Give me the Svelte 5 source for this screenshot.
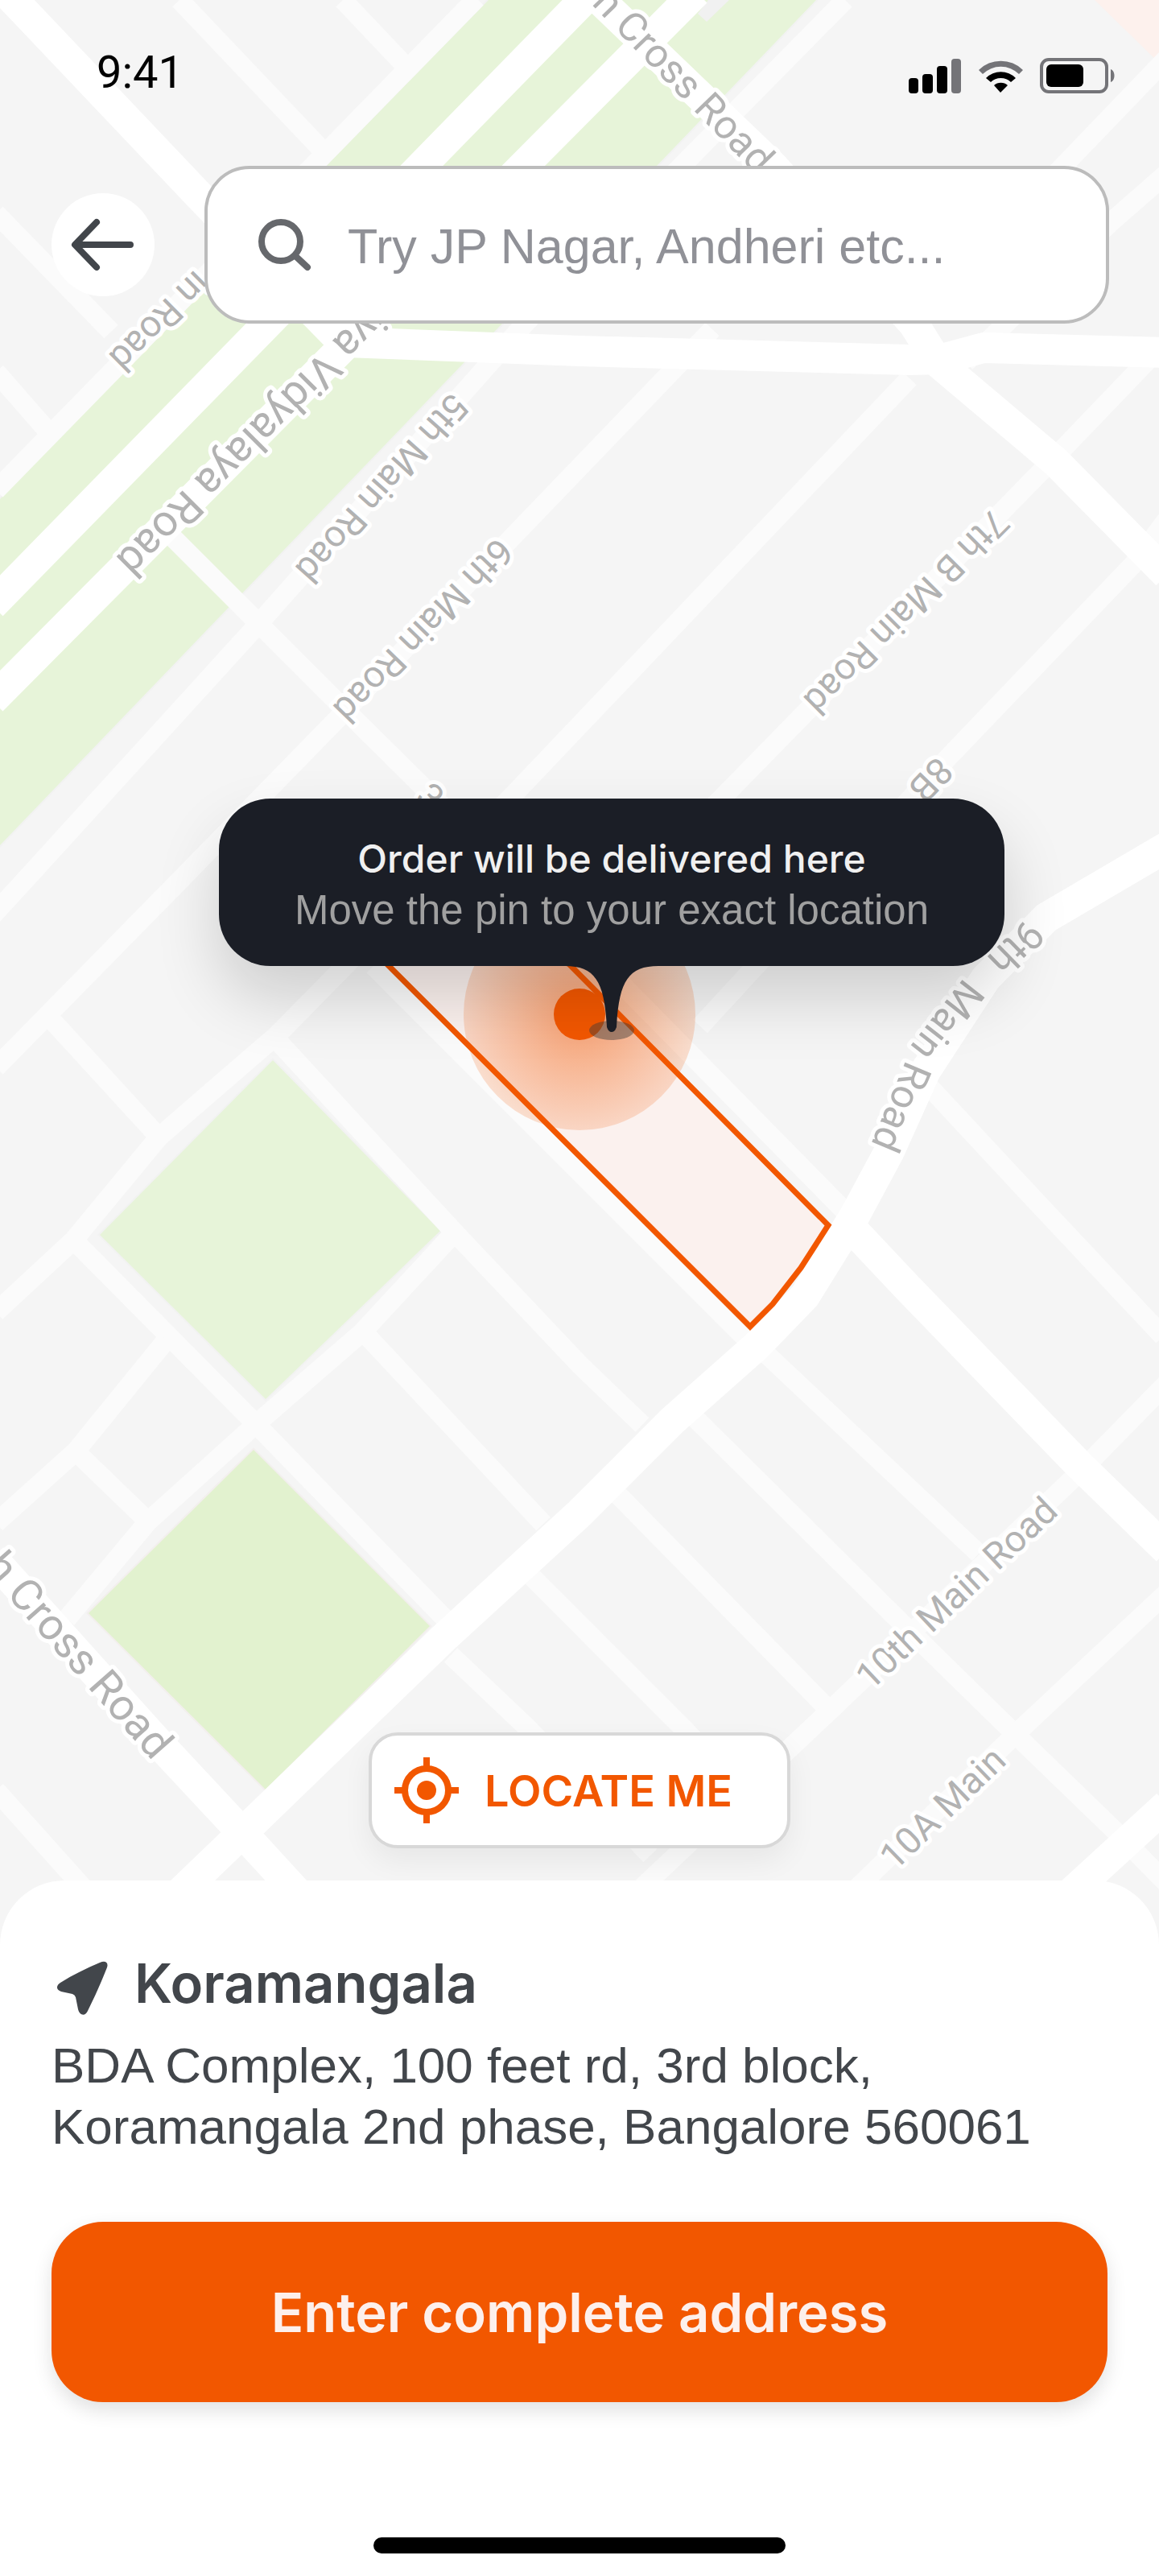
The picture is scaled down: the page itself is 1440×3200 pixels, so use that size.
<script lang="ts">
  let query = $state('');

  const minorRoads = [
    'M223 0 L397 183',
    'M426 0 L500 78',
    'M592 -2 L-5 609',
    'M1050 0 L847 206 L652 402 L322 774 L25 1100 L-10 1138',
    'M-5 265 L138 412',
    'M-5 462 L58 534',
    'M215 668 L425 878 L756 1206 L1050 1505',
    'M464 1200 L925 1661',
    'M885 409 L425 887 L225 1092 L60 1260 L-5 1326',
    'M1130 470 L640 985 L345 1285 L197 1413 L92 1540 L-5 1630',
    'M1450 215 L1378 278 L1200 450',
    'M1450 72 L1300 228',
    'M1445 428 L1300 579 L908 980 L700 1190',
    'M1450 645 L1409 700 L1179 940 L870 1275',
    'M1150 1345 L1285 1490 L1445 1660',
    'M55 1257 L197 1412',
    'M344 1292 L564 1530 L720 1695 L798 1770',
    'M564 1532 L450 1655 L317 1770 L184 1890 L83 2011',
    'M450 1653 L675 1893',
    'M96 1545 L317 1768 L555 2013',
    'M207 1664 L94 1803 L-5 1892',
    'M94 1803 L184 1890',
    'M-5 2224 L108 2350',
    'M950 1680 L1216 1930',
    'M862 1760 L1119 2015 L1262 2155 L1386 2275 L1450 2340',
    'M768 1857 L1028 2122',
    'M661 1959 L849 2147 L880 2180',
    'M560 2056 L656 2147 L808 2305',
    'M1450 1718 L1340 1830 L1032 2124 L790 2352',
    'M1450 1978 L1264 2152 L1060 2350',
  ];

  const majorRoads = [
    'M-10 -28 L254 250 L440 440',
    'M-10 752 L735 -10',
    'M-10 870 L865 -10',
    'M735 -10 L960 206 L1135 402 L1165 450 L1312 574 L1450 714',
    'M430 425 L720 436 L1130 447 L1170 446 L1222 432 L1450 438',
    'M1450 1052 L1300 1140 L1225 1215 L1150 1330 L1105 1430 L1062 1510 L1000 1610 L940 1672 L835 1765 L720 1880 L551 2035 L303 2275 L225 2350',
    'M1062 1530 L1128 1600 L1340 1819 L1450 1926',
    'M-10 1935 L193 2161 L303 2279 L370 2352',
    'M1450 2242 L1330 2352',
  ];

  const parks = [
    'M607 0 L254 361 L0 620 L0 1050 L300 738 L576 451 L816 206 L1014 0 Z',
    'M339 1317 L547 1529 L330 1738 L124 1534 Z',
  ];

  // Each name runs along its own baseline; "end" pins the last letter instead of the first.
  const labels = [
    { text: 'h Cross Road', path: 'M690 -41 L940 218', size: 50, end: true },
    { text: 'in Road', path: 'M313 264 L133 442', size: 46, end: true },
    { text: 'iya Vidyalaya Road', path: 'M502 334 L142 694', size: 54, end: true },
    { text: '5th Main Road', path: 'M562 485 L330 745', size: 46 },
    { text: '6th Main Road', path: 'M618 666 L388 903', size: 46 },
    { text: '7th B Main Road', path: 'M1234 630 L940 924', size: 46 },
    { text: '8B', path: 'M1164 938 L1014 1093', size: 46 },
    { text: '3rd', path: 'M514 992 L700 1178', size: 46 },
    { text: '9th', path: 'M1276 1140 L1184 1230', size: 50 },
    { text: 'Main', path: 'M1198 1214 L1118 1316', size: 50 },
    { text: 'Road', path: 'M1126 1316 L1070 1450', size: 50 },
    { text: 'h Cross Road', path: 'M-70 1893 L190 2188', size: 54, end: true },
    { text: '10th Main Road', path: 'M1082 2101 L1342 1856', size: 46 },
    { text: '10A Main', path: 'M1112 2325 L1292 2151', size: 46 },
  ];
</script>

<main class="screen">
  <section class="map">
    <svg class="map-canvas" viewBox="0 0 1440 2416" preserveAspectRatio="xMidYMin slice" aria-hidden="true">
      <defs>
        <radialGradient id="halo">
          <stop offset="0.2" stop-color="#f25700" stop-opacity="0.46" />
          <stop offset="1" stop-color="#f25700" stop-opacity="0.18" />
        </radialGradient>
      </defs>
      <rect width="1440" height="2416" fill="#f5f5f5" />
      <path d="M1360 0 H1440 V78 Z" fill="#fdf1ed" />
      {#each parks as park}
        <path class="park" d={park} />
      {/each}
      <path class="park dark" d="M315 1801 L534 2020 L330 2223 L110 2004 Z" />
      <path d="M867 17 L878 27 L906 0 H880 Z" fill="#f1f1f1" />
      {#each minorRoads as road}
        <path class="road minor" d={road} />
      {/each}
      {#each majorRoads as road}
        <path class="road major" d={road} />
      {/each}
      {#each labels as label, i}
        <path id="street-{i}" d={label.path} fill="none" />
        <text class="street" font-size={label.size} text-anchor={label.end ? 'end' : 'start'}>
          <textPath href="#street-{i}" startOffset={label.end ? '100%' : '0'}>{label.text}</textPath>
        </text>
      {/each}
      <path
        d="M383 1100 L932 1648 L960 1620 L995 1575 L1029 1522 L614 1104 Z"
        fill="#fbf1ee"
        stroke="#f25700"
        stroke-width="7"
      />
      <circle cx="720" cy="1260" r="144" fill="url(#halo)" />
      <circle cx="720" cy="1260" r="32" fill="#f25700" />
    </svg>

    <div class="status-bar">
      <span class="time">9:41</span>
      <svg class="status-icons" viewBox="0 0 256 44" aria-hidden="true">
        <rect x="0" y="25" width="12" height="19" rx="4" />
        <rect x="17" y="20" width="13" height="24" rx="4" />
        <rect x="35" y="10" width="13" height="34" rx="4" />
        <rect x="53" y="1" width="12" height="43" rx="4" fill="#747478" />
        <path d="M87 15 A39 39 0 0 1 142 15 L137 20 A32 32 0 0 0 92 20 Z" fill="#747478" />
        <path d="M96 25 A26 26 0 0 1 133 25 L127 30 A18 18 0 0 0 102 30 Z" />
        <path d="M106 34 A13 13 0 0 1 123 34 L114 43 Z" />
        <rect x="165" y="2" width="81" height="40" rx="9" fill="none" stroke="#747478" stroke-width="4" />
        <rect x="171" y="8" width="46" height="28" rx="6" />
        <path d="M251 14 C257 16 257 28 251 30 Z" fill="#747478" />
      </svg>
    </div>

    <div class="top-row">
      <button class="back" type="button" aria-label="Go back">
        <svg viewBox="0 0 80 72" aria-hidden="true">
          <path d="M32 8 L5 36 L32 64 M6 36 H74" />
        </svg>
      </button>
      <label class="search">
        <svg viewBox="0 0 68 68" aria-hidden="true">
          <circle cx="29" cy="30" r="24" />
          <path d="M47 48 L62 62" />
        </svg>
        <input type="text" aria-label="Search for a location" placeholder="Try JP Nagar, Andheri etc..." bind:value={query} />
      </label>
    </div>

    <div class="pin">
      <div class="bubble">
        <strong>Order will be delivered here</strong>
        <span>Move the pin to your exact location</span>
      </div>
      <svg class="stem" viewBox="0 0 128 94" aria-hidden="true">
        <ellipse cx="64" cy="80" rx="28" ry="12" fill="#3b3b3b" fill-opacity="0.45" />
        <path d="M6 0 C44 0 55 20 58 76 Q60 82 64 82 Q68 82 70 76 C73 20 84 0 122 0 Z" fill="#1b1e26" />
      </svg>
    </div>

    <button class="locate" type="button">
      <svg viewBox="0 0 80 82" aria-hidden="true">
        <circle cx="40" cy="41" r="27" fill="none" stroke="#f25700" stroke-width="8" />
        <circle cx="40" cy="41" r="12" fill="#f25700" />
        <path d="M40 0 V12 M40 70 V82 M0 41 H12 M68 41 H80" stroke="#f25700" stroke-width="8" />
      </svg>
      LOCATE ME
    </button>
  </section>

  <section class="sheet">
    <h1>
      <svg viewBox="0 0 64 68" aria-hidden="true">
        <path
          d="M53 2 C60 -1 64 2 62 8 C55 26 46 46 38 62 C35 69 28 68 26 60 L23 45 Q22 42 19 41 L5 38 C-1 36 -2 31 4 27 C20 17 36 9 53 2 Z"
          fill="#42464b"
        />
      </svg>
      Koramangala
    </h1>
    <p>BDA Complex, 100 feet rd, 3rd block,<br />Koramangala 2nd phase, Bangalore 560061</p>
    <button class="primary" type="button">Enter complete address</button>
    <div class="home-bar"></div>
  </section>
</main>

<style>
  :global(body) {
    margin: 0;
    background: #fff;
  }

  .screen {
    display: flex;
    flex-direction: column;
    min-height: 100vh;
    color: #42464b;
    font-family: 'Liberation Sans', Arial, sans-serif;
    font-size: 62px;
  }

  button {
    border: none;
    cursor: pointer;
    font-family: Inter, 'Liberation Sans', sans-serif;
    font-weight: 600;
  }

  .map {
    position: relative;
    display: flex;
    flex: 1;
    flex-direction: column;
    min-height: 1800px;
    padding-bottom: 120px;
    box-sizing: border-box;
    overflow: hidden;
    background: #f5f5f5;
  }

  .map-canvas {
    position: absolute;
    inset: 0;
    width: 100%;
    height: 100%;
  }

  .park {
    fill: #e7f4d9;
    stroke: #f2f2f2;
    stroke-width: 4;
    paint-order: stroke;
  }

  .park.dark {
    fill: #e2f2cf;
    stroke: #f3efee;
  }

  .road {
    fill: none;
    stroke-linejoin: round;
  }

  .minor {
    stroke: #fbfbfb;
    stroke-width: 24;
  }

  .major {
    stroke: #fff;
    stroke-width: 38;
  }

  .street {
    fill: #b2b2b2;
    stroke: #fff;
    stroke-width: 10;
    stroke-linejoin: round;
    paint-order: stroke;
    font-family: Roboto, sans-serif;
  }

  .status-bar,
  .top-row {
    position: relative;
    display: flex;
    align-items: center;
  }

  .status-bar {
    justify-content: space-between;
    height: 60px;
    padding: 60px 55px 0 120px;
  }

  .time {
    color: #000;
    font-family: Roboto, sans-serif;
    font-size: 56px;
    line-height: 60px;
  }

  .status-icons {
    width: 256px;
    height: 44px;
    padding-top: 8px;
  }

  .top-row {
    gap: 62px;
    padding: 86px 62px 0 64px;
  }

  .back {
    display: flex;
    flex: none;
    align-items: center;
    justify-content: center;
    width: 128px;
    height: 128px;
    padding: 0;
    border-radius: 50%;
    background: #fff;
  }

  .back svg {
    width: 80px;
    height: 72px;
    fill: none;
    stroke: #42464b;
    stroke-width: 8;
    stroke-linecap: round;
    stroke-linejoin: round;
  }

  .search {
    display: flex;
    flex: 1;
    align-items: center;
    gap: 44px;
    min-width: 0;
    height: 196px;
    padding: 0 62px;
    box-sizing: border-box;
    border: 4px solid #bcbcbc;
    border-radius: 56px;
    background: #fff;
  }

  .search svg {
    flex: none;
    width: 68px;
    height: 68px;
    fill: none;
    stroke: #66686c;
    stroke-width: 8;
    stroke-linecap: round;
  }

  .search input {
    flex: 1;
    min-width: 0;
    padding: 4px 0 0;
    border: none;
    outline: none;
    background: none;
    color: #42464b;
    font: inherit;
    font-size: 61px;
  }

  .search input::placeholder {
    color: #909197;
    opacity: 1;
  }

  .pin {
    position: absolute;
    top: 992px;
    left: calc(50% + 40px);
    display: flex;
    flex-direction: column;
    align-items: center;
    transform: translateX(-50%);
  }

  .bubble {
    display: flex;
    flex-direction: column;
    align-items: center;
    justify-content: center;
    width: 976px;
    height: 208px;
    padding-top: 6px;
    box-sizing: border-box;
    border-radius: 64px;
    background: #1b1e26;
    box-shadow: 0 40px 80px rgba(0, 0, 0, 0.16);
    color: #a0a0a0;
    font-size: 51px;
    line-height: 64px;
    white-space: nowrap;
  }

  .bubble strong {
    color: #f0f0f0;
    font-family: Inter, 'Liberation Sans', sans-serif;
    font-size: 48px;
    font-weight: 500;
  }

  .stem {
    position: relative;
    width: 128px;
    height: 94px;
  }

  .locate {
    position: relative;
    display: flex;
    align-items: center;
    align-self: center;
    gap: 32px;
    height: 144px;
    margin-top: auto;
    padding: 0 68px 0 28px;
    border: 4px solid #d8d8d8;
    border-radius: 36px;
    background: #fff;
    box-shadow: 0 16px 36px rgba(0, 0, 0, 0.06);
    color: #f25700;
    font-size: 54px;
  }

  .locate svg {
    width: 80px;
    height: 82px;
  }

  .sheet {
    position: relative;
    margin-top: -80px;
    padding: 86px 64px 28px;
    border-radius: 80px 80px 0 0;
    background: #fff;
  }

  h1 {
    display: flex;
    align-items: center;
    gap: 32px;
    margin: 0 0 22px;
    padding-left: 7px;
    font-family: Inter, 'Liberation Sans', sans-serif;
    font-size: 67px;
    font-weight: 600;
    line-height: 84px;
  }

  h1 svg {
    width: 64px;
    height: 68px;
    padding-top: 12px;
  }

  p {
    margin: 0 0 80px;
    line-height: 76px;
  }

  .primary {
    display: block;
    width: 100%;
    height: 224px;
    border-radius: 64px;
    background: #f25700;
    box-shadow: 0 10px 24px rgba(0, 0, 0, 0.12);
    color: #fdf0ec;
    font-size: 67px;
  }

  .home-bar {
    width: 512px;
    height: 20px;
    margin: 168px auto 0;
    border-radius: 10px;
    background: #000;
  }
</style>
